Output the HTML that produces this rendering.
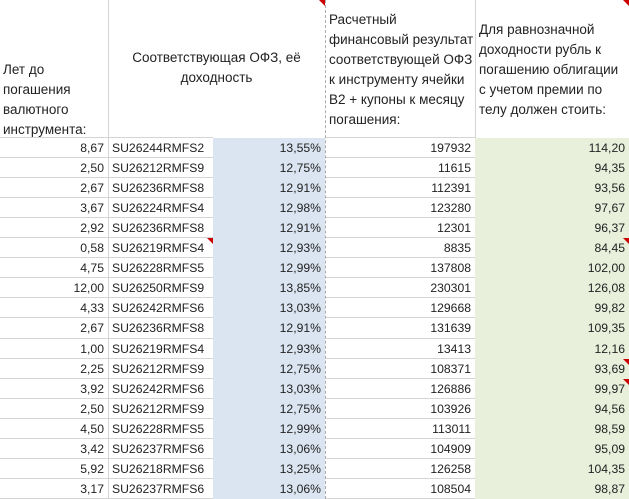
<!DOCTYPE html><html><head><meta charset="utf-8"><style>
body{margin:0;width:629px;height:499px;overflow:hidden;background:#fff;font-family:"Liberation Sans",sans-serif;font-size:12.2px;color:#222;position:relative}
.c{position:absolute;box-sizing:border-box;height:20px;line-height:20px;white-space:nowrap;overflow:hidden}
.r{text-align:right;padding-right:4px}
.l{padding-left:3px}
.h{position:absolute;line-height:20px;font-size:13.5px}
.tri{position:absolute;width:0;height:0;border-top:6px solid #c00;border-left:6px solid transparent}
</style></head><body>
<div style="position:absolute;left:213px;top:138px;width:112px;height:361px;background:#dbe5f1"></div>
<div style="position:absolute;left:475px;top:138px;width:154px;height:361px;background:#e8f0dc"></div>
<div style="position:absolute;left:108px;top:0;width:1px;height:499px;background:#d4d4d4"></div>
<div style="position:absolute;left:475px;top:0;width:1px;height:138px;background:#d4d4d4"></div>
<div style="position:absolute;left:325px;top:0;height:499px;border-left:1px dashed #aaa"></div>
<div id="g"></div>
<div class="h" style="left:3px;top:60px">Лет до<br>погашения<br>валютного<br>инструмента:</div>
<div class="h" style="left:108px;width:217px;top:48px;text-align:center">Соответствующая ОФЗ, её<br>доходность</div>
<div class="h" style="left:329px;top:10px">Расчетный<br>финансовый результат<br>соответствующей ОФЗ<br>к инструменту ячейки<br>В2 + купоны к месяцу<br>погашения:</div>
<div class="h" style="left:479px;top:20px">Для равнозначной<br>доходности рубль к<br>погашению облигации<br>с учетом премии по<br>телу должен стоить:</div>
<div class="tri" style="left:319px;top:0"></div>
<div class="tri" style="left:623px;top:0"></div>
<script>
var d=[["8,67","SU26244RMFS2","13,55%","197932","114,20"],["2,50","SU26212RMFS9","12,75%","11615","94,35"],["2,67","SU26236RMFS8","12,91%","112391","93,56"],["3,67","SU26224RMFS4","12,98%","123280","97,67"],["2,92","SU26236RMFS8","12,91%","12301","96,37"],["0,58","SU26219RMFS4","12,93%","8835","84,45"],["4,75","SU26228RMFS5","12,99%","137808","102,00"],["12,00","SU26250RMFS9","13,85%","230301","126,08"],["4,33","SU26242RMFS6","13,03%","129668","99,82"],["2,67","SU26236RMFS8","12,91%","131639","109,35"],["1,00","SU26219RMFS4","12,93%","13413","12,16"],["2,25","SU26212RMFS9","12,75%","108371","93,69"],["3,92","SU26242RMFS6","13,03%","126886","99,97"],["2,50","SU26212RMFS9","12,75%","103926","94,56"],["4,50","SU26228RMFS5","12,99%","113011","98,59"],["3,42","SU26237RMFS6","13,06%","104909","95,09"],["5,92","SU26218RMFS6","13,25%","126258","104,35"],["3,17","SU26237RMFS6","13,06%","108504","98,87"]];
var RH=20.05,h="";
h+='<div style="position:absolute;left:0;top:137px;width:213px;height:1px;background:#d4d4d4"></div><div style="position:absolute;left:326px;top:137px;width:149px;height:1px;background:#d4d4d4"></div>';
for(var i=0;i<d.length;i++){var t=138+i*RH;var r=d[i];
h+='<div class="c r" style="left:0;width:108px;top:'+t+'px">'+r[0]+'</div>';
h+='<div class="c l" style="left:109px;width:104px;top:'+t+'px">'+r[1]+'</div>';
h+='<div class="c r" style="left:213px;width:112px;top:'+t+'px">'+r[2]+'</div>';
h+='<div class="c r" style="left:326px;width:149px;top:'+t+'px">'+r[3]+'</div>';
h+='<div class="c r" style="left:475px;width:154px;top:'+t+'px">'+r[4]+'</div>';
var b=t+RH-1;
h+='<div style="position:absolute;left:0;top:'+b+'px;width:213px;height:1px;background:#d4d4d4"></div><div style="position:absolute;left:326px;top:'+b+'px;width:149px;height:1px;background:#d4d4d4"></div>';
}
h+='<div class="tri" style="left:207px;top:'+(138+5*RH)+'px"></div>';
[5,11,12].forEach(function(k){h+='<div class="tri" style="left:623px;top:'+(138+k*RH)+'px"></div>';});
document.getElementById("g").innerHTML=h;
</script>
</body></html>
